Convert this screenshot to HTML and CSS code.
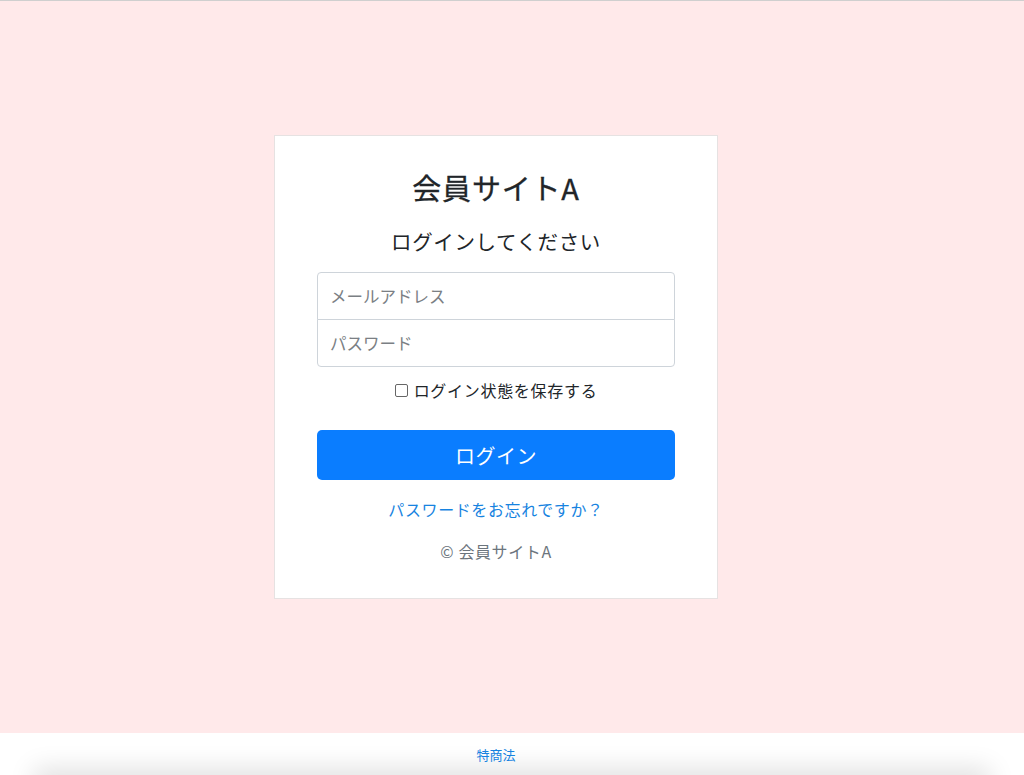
FILE: index.html
```html
<!DOCTYPE html>
<html lang="ja">
<head>
<meta charset="utf-8">
<title>会員サイトA</title>
<link rel="stylesheet" href="styles.css">
</head>
<body>
<div class="page">
  <main class="main">
    <div class="card">
      <h1 class="title">会員サイトA</h1>
      <h2 class="subtitle">ログインしてください</h2>
      <form class="form">
        <div class="inputs">
          <input class="field field-top" type="email" placeholder="メールアドレス">
          <input class="field field-bottom" type="password" placeholder="パスワード">
        </div>
        <label class="remember"><span class="box"></span>ログイン状態を保存する</label>
        <button class="btn" type="button">ログイン</button>
        <a class="forgot" href="#">パスワードをお忘れですか？</a>
        <p class="copy">© 会員サイトA</p>
      </form>
    </div>
  </main>
  <footer class="footer">
    <a class="footer-link" href="#">特商法</a>
  </footer>
</div>
</body>
</html>
```
FILE: styles.css
```css
* { box-sizing: border-box; }
html, body { margin: 0; padding: 0; height: 100%; }
body {
  font-family: "Noto Sans CJK JP", "Noto Sans", sans-serif;
  color: #212529;
  background: #ffe9ea;
  overflow: hidden;
}
.page {
  display: flex;
  flex-direction: column;
  height: 775px;
  border-top: 1px solid #cfcfcf;
}
.main {
  flex: 1;
  display: flex;
  align-items: center;
  justify-content: center;
  padding-right: 32px;
}
.card {
  width: 444px;
  height: 464px;
  background: #fff;
  border: 1px solid #e6e2e2;
  padding: 28px 42px 0 42px;
  text-align: center;
}
.title {
  margin: 0;
  font-size: 29px;
  font-weight: 400;
  line-height: 46px;
  letter-spacing: 0.8px;
  -webkit-text-stroke: 0.3px #212529;
}
.subtitle {
  margin: 16px 0 0;
  font-size: 20.5px;
  font-weight: 400;
  line-height: 30px;
  letter-spacing: 0.6px;
}
.form { margin-top: 16px; display: flex; flex-direction: column; align-items: stretch; }
.inputs { display: flex; flex-direction: column; }
.field {
  height: 48px;
  border: 1px solid #ced4da;
  font-family: inherit;
  font-size: 16.5px;
  padding: 0 12px;
  color: #495057;
  background: #fff;
  outline: none;
}
.field::placeholder { color: #7b7f84; }
.field-top { border-radius: 4px 4px 0 0; }
.field-bottom { border-radius: 0 0 4px 4px; margin-top: -1px; height: 48px; }
.remember {
  margin-top: 11px;
  display: flex;
  align-items: center;
  justify-content: center;
  font-size: 16px;
  line-height: 24px;
  color: #212529;
  letter-spacing: 0.7px;
}
.box {
  display: inline-block;
  width: 13px;
  height: 13px;
  border: 1px solid #666;
  border-radius: 2px;
  margin-right: 6px;
  background: #fff;
}
.btn {
  margin-top: 28px;
  height: 50px;
  border: none;
  border-radius: 5px;
  background: #0a7dff;
  color: #fff;
  font-family: inherit;
  font-size: 20px;
  letter-spacing: 0.5px;
  cursor: pointer;
}
.forgot {
  margin-top: 17px;
  color: #1783e0;
  text-decoration: none;
  font-size: 16px;
  line-height: 24px;
  letter-spacing: 0.6px;
}
.copy {
  margin: 18px 0 0;
  color: #6c757d;
  font-size: 16px;
  line-height: 24px;
  letter-spacing: 0.6px;
}
.footer {
  height: 42px;
  background: #fff;
  display: flex;
  align-items: center;
  justify-content: center;
  position: relative;
  overflow: hidden;
}
.footer::after {
  content: "";
  position: absolute;
  left: 40px;
  right: 40px;
  bottom: -14px;
  height: 14px;
  box-shadow: 0 0 26px 6px rgba(0, 0, 0, 0.13);
}
.footer-link {
  color: #1783e0;
  text-decoration: none;
  font-size: 13px;
  margin-left: -32px;
  position: relative;
  z-index: 1;
}
```
